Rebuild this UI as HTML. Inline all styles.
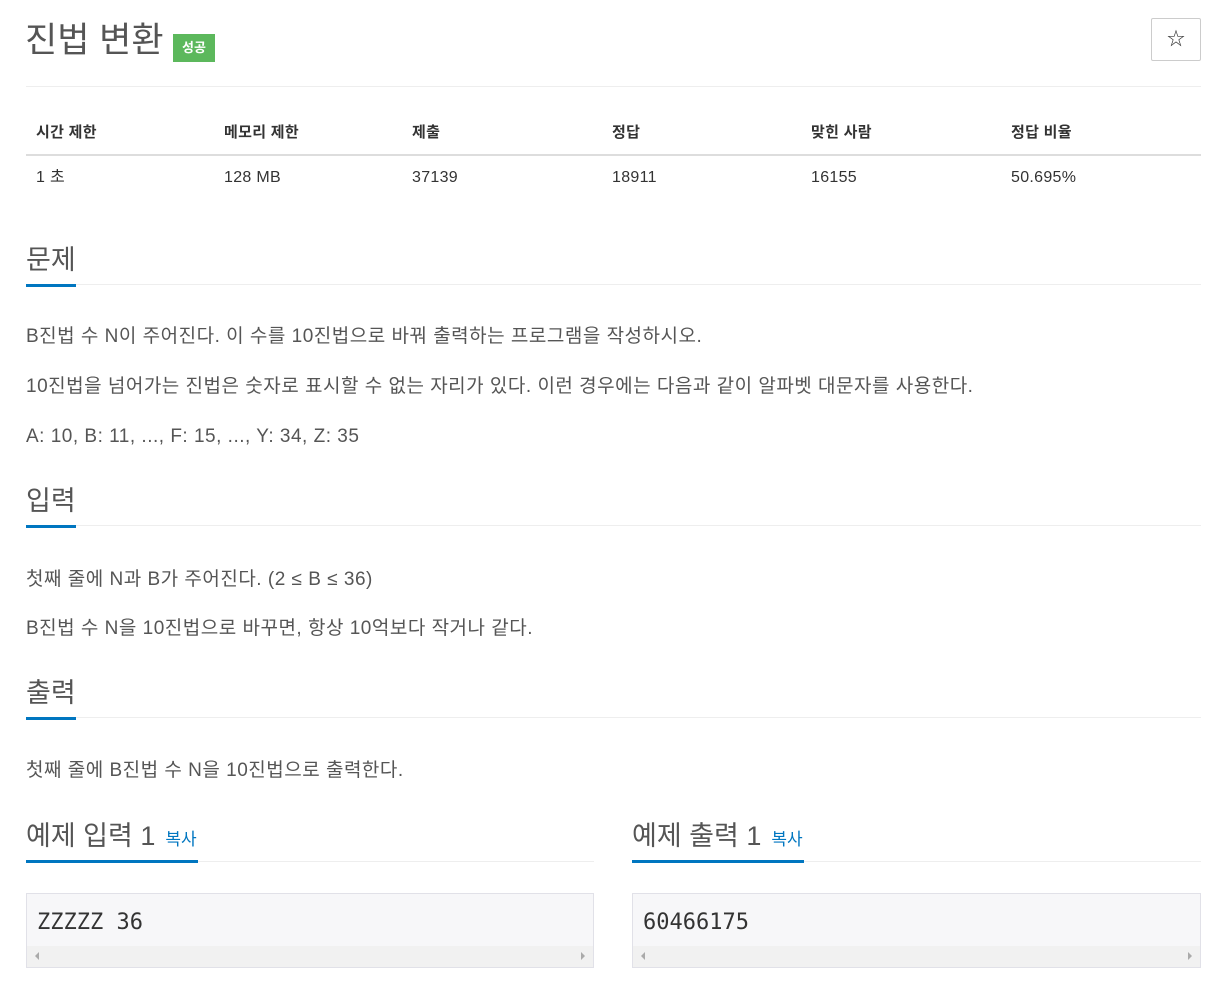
<!DOCTYPE html><html><head><meta charset="utf-8"><style>
body{margin:0;background:#fff;font-family:"Liberation Sans","Noto Sans CJK KR",sans-serif;color:#555;width:1232px;height:999px;position:relative;overflow:hidden}
.a{position:absolute;white-space:nowrap}
.h{font-size:27px;color:#555;line-height:30px}
.p{font-size:19px;line-height:24px;color:#555;letter-spacing:0.5px}
.ul{position:absolute;height:1px;background:#eee}
.bl{position:absolute;height:3px;background:#0076c0}
.th{font-size:15px;font-weight:bold;color:#333;line-height:20px;letter-spacing:0.3px}
.td{font-size:16px;color:#333;line-height:20px;letter-spacing:0.3px}
.pre{position:absolute;top:893px;height:73px;background:#f7f7f9;border:1px solid #e1e1e8}
.pre span{position:absolute;left:10px;top:16px;font-family:"DejaVu Sans Mono","Liberation Mono",monospace;font-size:22px;color:#333}
.sb{position:absolute;left:0;right:0;bottom:0;height:21px;background:#f1f1f1}
.cp{font-size:17px;color:#0076c0;margin-left:10px}
</style></head><body>
<div class="a" style="left:25px;top:19px;font-size:35px;line-height:44px;color:#555">진법 변환</div>
<div class="a" style="left:173px;top:34px;width:42px;height:28px;background:#5cb85c;color:#fff;font-size:13px;line-height:28px;text-align:center;font-weight:bold">성공</div>
<div class="a" style="left:1151px;top:18px;width:48px;height:41px;border:1px solid #ccc;border-radius:2px;text-align:center;line-height:41px;font-size:18px;color:#333">☆</div>
<div class="ul" style="left:26px;top:86px;width:1175px"></div>
<div class="a th" style="left:36px;top:123px">시간 제한</div>
<div class="a th" style="left:224px;top:123px">메모리 제한</div>
<div class="a th" style="left:412px;top:123px">제출</div>
<div class="a th" style="left:612px;top:123px">정답</div>
<div class="a th" style="left:811px;top:123px">맞힌 사람</div>
<div class="a th" style="left:1011px;top:123px">정답 비율</div>
<div class="a" style="left:26px;top:154px;width:1175px;height:2px;background:#ddd"></div>
<div class="a td" style="left:36px;top:168px">1 초</div>
<div class="a td" style="left:224px;top:168px">128 MB</div>
<div class="a td" style="left:412px;top:168px">37139</div>
<div class="a td" style="left:612px;top:168px">18911</div>
<div class="a td" style="left:811px;top:168px">16155</div>
<div class="a td" style="left:1011px;top:168px">50.695%</div>

<div class="a h" style="left:26px;top:245px">문제</div>
<div class="ul" style="left:26px;top:284px;width:1175px"></div><div class="bl" style="left:26px;top:284px;width:50px"></div>
<div class="a p" style="left:26px;top:325px">B진법 수 N이 주어진다. 이 수를 10진법으로 바꿔 출력하는 프로그램을 작성하시오.</div>
<div class="a p" style="left:26px;top:375px">10진법을 넘어가는 진법은 숫자로 표시할 수 없는 자리가 있다. 이런 경우에는 다음과 같이 알파벳 대문자를 사용한다.</div>
<div class="a p" style="left:26px;top:425px">A: 10, B: 11, ..., F: 15, ..., Y: 34, Z: 35</div>

<div class="a h" style="left:26px;top:486px">입력</div>
<div class="ul" style="left:26px;top:525px;width:1175px"></div><div class="bl" style="left:26px;top:525px;width:50px"></div>
<div class="a p" style="left:26px;top:568px">첫째 줄에 N과 B가 주어진다. (2 ≤ B ≤ 36)</div>
<div class="a p" style="left:26px;top:617px">B진법 수 N을 10진법으로 바꾸면, 항상 10억보다 작거나 같다.</div>

<div class="a h" style="left:26px;top:678px">출력</div>
<div class="ul" style="left:26px;top:717px;width:1175px"></div><div class="bl" style="left:26px;top:717px;width:50px"></div>
<div class="a p" style="left:26px;top:759px">첫째 줄에 B진법 수 N을 10진법으로 출력한다.</div>

<div class="a h" style="left:26px;top:821px">예제 입력 1<span class="cp">복사</span></div>
<div class="ul" style="left:26px;top:861px;width:568px"></div><div class="bl" style="left:26px;top:860px;width:172px"></div>
<div class="a h" style="left:632px;top:821px">예제 출력 1<span class="cp">복사</span></div>
<div class="ul" style="left:632px;top:861px;width:569px"></div><div class="bl" style="left:632px;top:860px;width:172px"></div>

<div class="pre" style="left:26px;width:566px"><span>ZZZZZ 36</span><div class="sb"><div class="a" style="left:8px;top:6px;border:4px solid transparent;border-right:4px solid #aaa;border-left:0;height:0"></div><div class="a" style="right:8px;top:6px;border:4px solid transparent;border-left:4px solid #aaa;border-right:0;height:0"></div></div></div>
<div class="pre" style="left:632px;width:567px"><span>60466175</span><div class="sb"><div class="a" style="left:8px;top:6px;border:4px solid transparent;border-right:4px solid #aaa;border-left:0;height:0"></div><div class="a" style="right:8px;top:6px;border:4px solid transparent;border-left:4px solid #aaa;border-right:0;height:0"></div></div></div>
</body></html>
